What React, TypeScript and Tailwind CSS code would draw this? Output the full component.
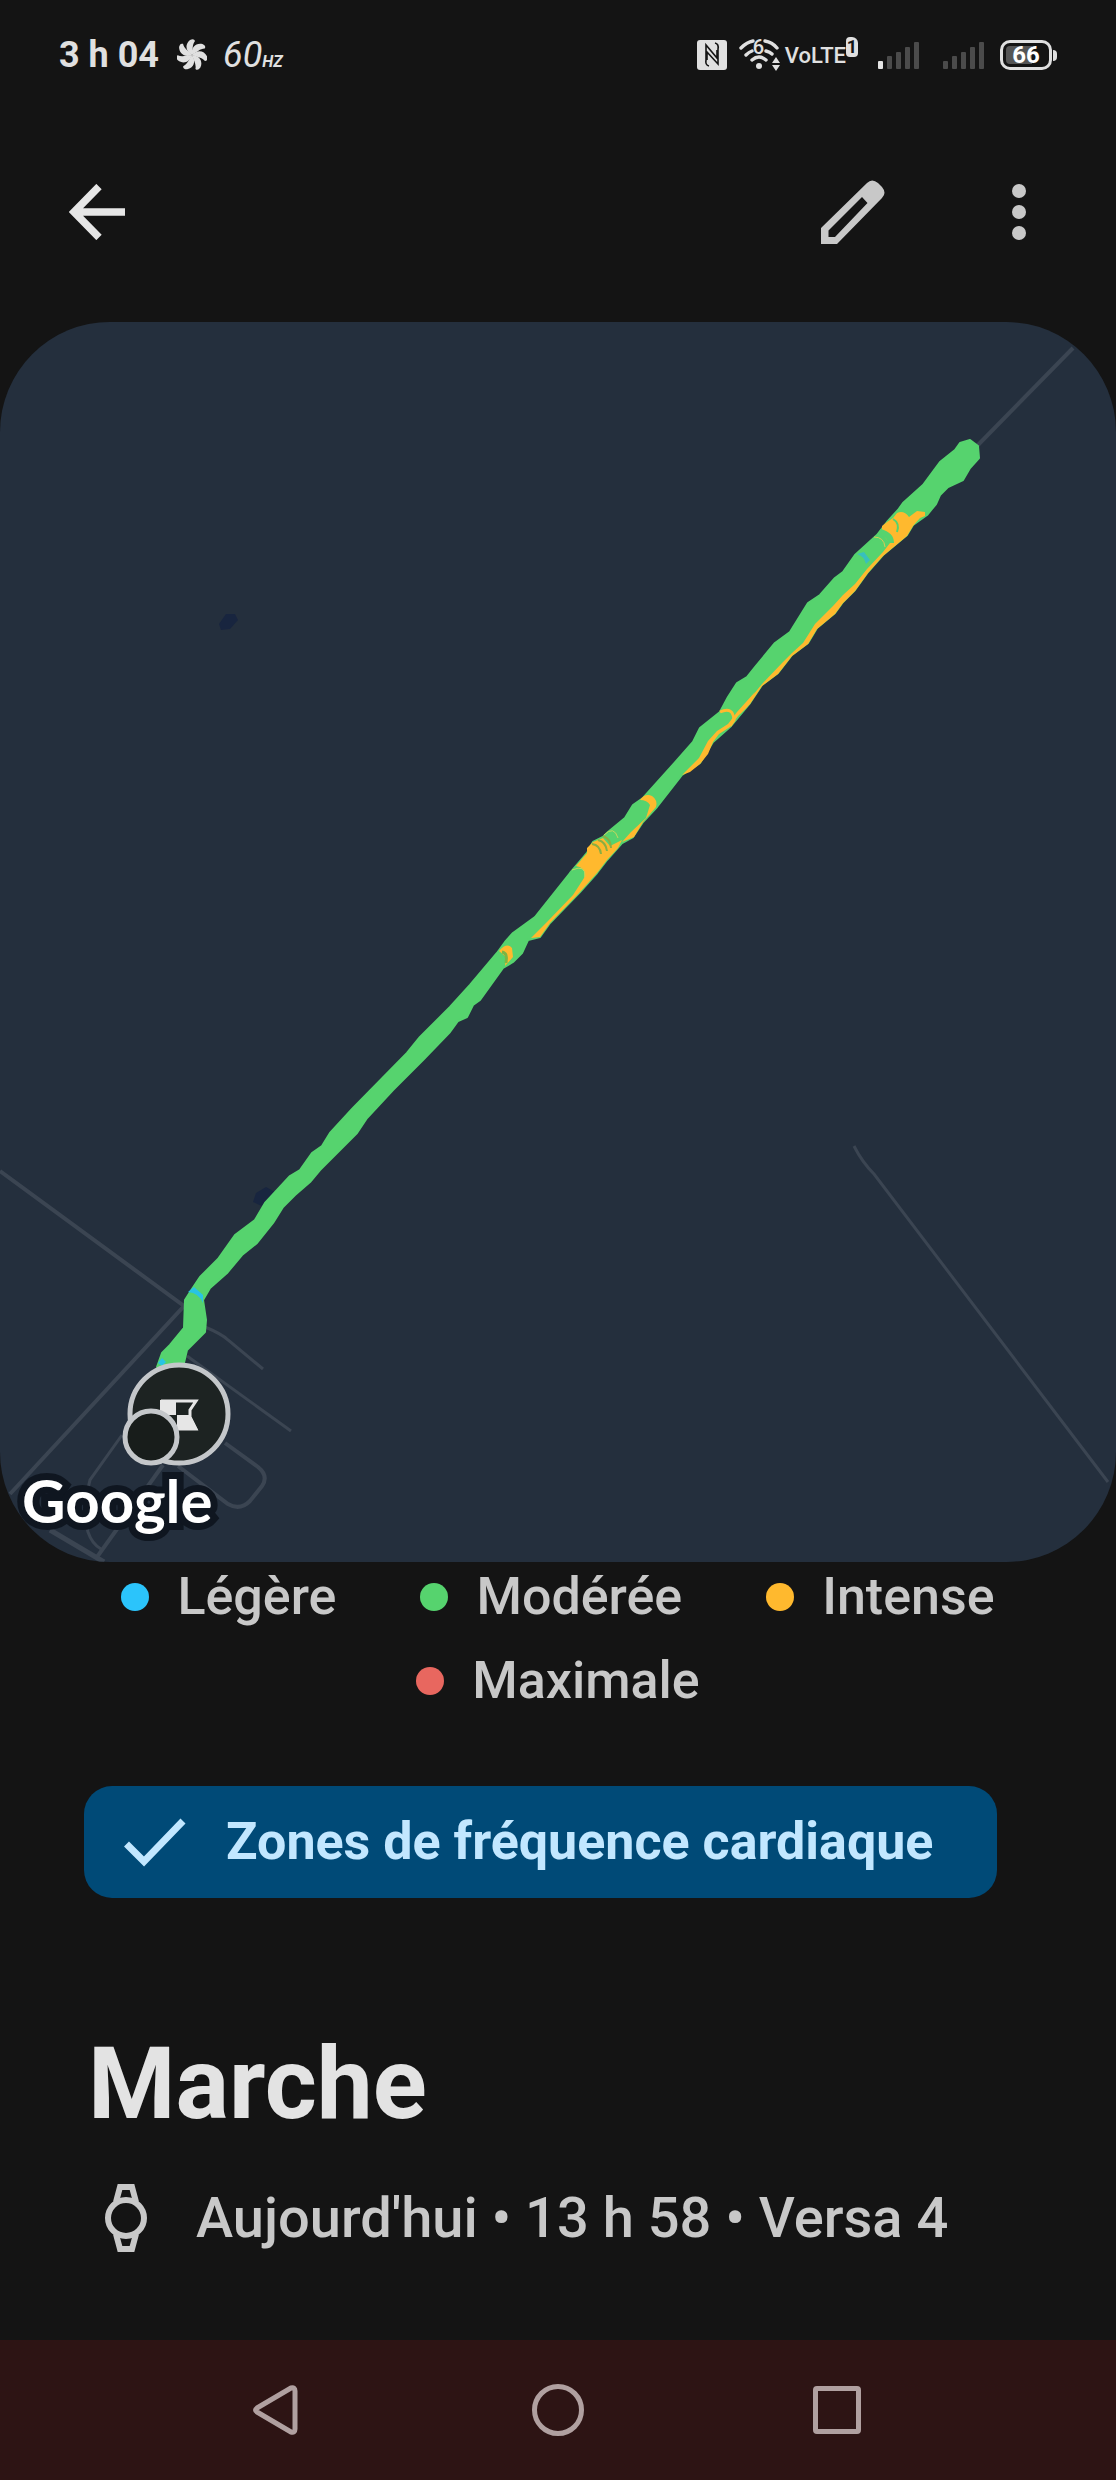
const zones = [
  { label: 'Légère', dot: 'bg-[#2bc4fb]' },
  { label: 'Modérée', dot: 'bg-[#56d36e]' },
  { label: 'Intense', dot: 'bg-[#ffb92e]' },
  { label: 'Maximale', dot: 'bg-[#e8675f]' },
];

const bars = [
  { x: 0, h: 8 },
  { x: 9, h: 13 },
  { x: 18, h: 17 },
  { x: 27, h: 22 },
  { x: 36, h: 27 },
];

function Signal({ level }: { level: number }) {
  return (
    <svg width="41" height="28" viewBox="0 0 41 28" aria-hidden="true">
      {bars.map((bar, i) => (
        <rect
          key={bar.x}
          x={bar.x}
          y={28 - bar.h}
          width="5"
          height={bar.h}
          rx="1"
          fill={i < level ? '#e4e4e4' : '#4b4b4b'}
        />
      ))}
    </svg>
  );
}

function Fan() {
  return (
    <svg width="30" height="32" viewBox="-15 -16 30 32" fill="#e0e0e0" aria-hidden="true">
      {[0, 51, 103, 154, 206, 257, 309].map((angle) => (
        <path key={angle} d="M0 0C-7 -4 -7 -11 -2 -15Q2 -17 3 -14C0 -10 1 -6 0 0Z" transform={`rotate(${angle})`} />
      ))}
    </svg>
  );
}

function Nfc() {
  return (
    <svg width="30" height="30" viewBox="0 0 30 30" aria-hidden="true">
      <rect width="30" height="30" rx="3" fill="#e0e0e0" />
      <path
        d="M12 26Q8 25 9 20V5L20 18V10M18 3Q22 4 21 9V24L10 12V20"
        fill="none"
        stroke="#141414"
        strokeWidth="1.6"
      />
    </svg>
  );
}

function Wifi() {
  return (
    <div className="relative">
      <svg width="42" height="34" viewBox="0 0 42 34" fill="none" stroke="#e0e0e0" strokeWidth="3.4" strokeLinecap="round" aria-hidden="true">
        <path d="M2 10Q8 4 14 3M26 3Q33 4 38 10" />
        <path d="M7 17Q10 14 13 13M27 13Q31 14 33 16" />
        <path d="M13 22Q20 16 27 22" />
        <circle cx="20" cy="28" r="3" fill="#e0e0e0" stroke="none" />
        <path d="M37 19L41 25H33ZM37 33L33 27H41Z" fill="#e0e0e0" stroke="none" />
      </svg>
      <span className="absolute left-[14px] top-0 text-[20px] font-medium leading-[18px]">6</span>
    </div>
  );
}

function StatusBar() {
  return (
    <div className="flex h-[110px] items-center justify-between px-[59px] text-[#e0e0e0]">
      <div className="flex items-center">
        <span className="text-[36px] font-bold">3 h 04</span>
        <span className="ml-[18px]">
          <Fan />
        </span>
        <span className="ml-4 flex items-baseline italic">
          <span className="text-[36px]">60</span>
          <span className="text-[16px] font-bold">HZ</span>
        </span>
      </div>
      <div className="flex items-center">
        <Nfc />
        <span className="ml-3">
          <Wifi />
        </span>
        <span className="ml-1 flex items-center">
          <span className="text-[22px] font-medium">VoLTE</span>
          <span className="mb-4 h-5 w-3 rounded-sm rounded-tr-md bg-[#e0e0e0] text-center text-[18px] font-bold leading-5 text-[#141414]">
            1
          </span>
        </span>
        <span className="ml-5">
          <Signal level={1} />
        </span>
        <span className="ml-6">
          <Signal level={0} />
        </span>
        <span className="ml-4 flex items-center gap-px">
          <span className="flex h-[30px] w-[52px] items-center justify-center rounded-[10px] border-[3px] border-[#e0e0e0] p-[3px]">
            <span className="flex h-full w-full items-center justify-center rounded-[4px] bg-linear-to-r from-[#555555] from-65% to-transparent to-65% text-[24px] font-bold text-white">
              66
            </span>
          </span>
          <span className="h-[11px] w-1 rounded-r-sm bg-[#e0e0e0]" />
        </span>
      </div>
    </div>
  );
}

function TopBar() {
  return (
    <header className="mb-2 flex h-[204px] items-center justify-between px-[49px]">
      <button type="button" aria-label="Retour" className="flex size-24 items-center justify-center">
        <svg width="56" height="56" viewBox="0 0 56 56" fill="none" stroke="#e6e6e6" strokeWidth="7.5">
          <path d="M56 28H6M30 2.500L5 28L30 53.500" />
        </svg>
      </button>
      <div className="flex gap-[70px]">
        <button type="button" aria-label="Modifier" className="flex size-24 items-center justify-center">
          <svg width="64" height="64" viewBox="0 0 64 64" fill="#c8c8c8">
            <path
              fillRule="evenodd"
              d="M0 48L46 3Q51 -2 57 3L61 7Q66 13 61 18L16 64H0ZM7.500 50.500V57H14L46.500 23L41 17Z"
            />
          </svg>
        </button>
        <button type="button" aria-label="Plus d'options" className="flex size-24 items-center justify-center">
          <svg width="14" height="56" viewBox="0 0 14 56" fill="#c8c8c8">
            <circle cx="7" cy="7" r="7" />
            <circle cx="7" cy="28" r="7" />
            <circle cx="7" cy="49" r="7" />
          </svg>
        </button>
      </div>
    </header>
  );
}

function RouteMap() {
  return (
    <section className="relative overflow-hidden rounded-[110px] bg-[#242f3d]">
      <svg viewBox="0 322 1116 1240" className="block h-auto w-full" role="img" aria-label="Parcours">
        {/* ponds */}
        <path d="M219 624L226 614L235 614L238 620L230 629L221 630Z" fill="#18253f" />
        <path d="M253 1202L256 1193L266 1187L275 1192L262 1206Z" fill="#18253f" />

        {/* roads */}
        <g fill="none" stroke="#3b4552" strokeWidth="4">
          <path d="M0 1171L184 1306L10 1494" />
          <path d="M205 1327Q222 1334 228 1340L263 1369" strokeWidth="3" />
          <path d="M187 1356L291 1431" strokeWidth="3" />
          <path d="M225 1443L258 1467Q269 1476 262 1486L250 1501Q240 1511 228 1504L178 1466" />
          <path d="M122 1435L90 1480Q82 1510 88 1532Q92 1544 101 1549" strokeWidth="3" />
          <path d="M163 1465L97 1557" />
          <path d="M50 1530L104 1562" strokeWidth="5" />
          <path d="M976 447L1073 348" />
          <path d="M854 1146Q862 1162 874 1174L1108 1482" strokeWidth="3" />
        </g>

        {/* moderate effort, whole walk */}
        <path
          fill="#56d36e"
          stroke="#56d36e"
          strokeWidth="2"
          strokeLinejoin="round"
          d="M157 1367L162 1353L170 1345L184 1328L185 1300L192 1289L200 1277L218 1259L235 1235L255 1220L265 1203L290 1176L300 1170L312 1153L322 1146L330 1133L353 1108L407 1053L420 1037L450 1007L470 985L497 953L505 942L513 933L535 917L570 873L587 853L593 842L603 837L608 832L625 818L633 805L643 798L670 768L693 742L700 728L720 712L728 697L737 683L747 677L755 667L775 643L790 632L808 603L820 595L835 578L843 572L855 555L877 535L887 522L898 510L903 503L923 485L940 462L955 450L960 443L970 440L978 446L979 458L970 468L963 480L948 487L940 495L936 504L927 515L913 525L907 535L895 545L883 555L868 572L855 590L843 602L835 613L817 628L808 643L792 655L778 673L762 685L750 703L730 727L713 742L700 763L682 775L657 807L643 822L633 837L622 843L607 860L597 873L580 892L550 923L540 937L528 940L522 953L513 962L503 968L480 1000L473 1005L467 1017L458 1021L450 1032L423 1060L393 1090L367 1118L357 1133L320 1170L310 1182L295 1195L283 1207L273 1223L257 1243L242 1255L227 1273L210 1288L203 1300L206 1320L205 1332L187 1350L183 1367Z"
        />

        {/* intense stretches */}
        <g fill="#ffb92e">
          <path d="M925 516L920 518L913 526L907 536L895 546L883 556L868 573L855 591L843 603L835 614L817 629L808 644L792 656L778 674L762 686L750 704L740 714L742 708L753 695L762 684L783 662L792 653L803 643L815 624L833 606L843 595L855 584L867 569L883 552L890 543L882 534V526L887 522L893 518L897 513Q904 510 909 517L917 511L925 512Z" />
          <path d="M755 692L747 707L738 716L730 727L719 734L713 742L708 754L700 764L690 772L682 775L699 758L708 741L717 731L728 724L737 712Z" />
          <path d="M640 800Q645 793 652 796Q658 800 656 807L643 822L634 837L622 842L631 832L646 818L650 805Q647 800 640 800Z" />
          <path d="M622 840L618 848L607 860L597 873L580 892L550 923L540 937L531 938L547 922L573 895L584 878Q587 868 576 866L587 853L587 848L593 842L603 838L610 846Z" />
          <path d="M499 951Q507 942 512 948L513 957L505 966L506 957Z" />
        </g>
        <g fill="none" strokeWidth="1">
          <path d="M720 712Q733 706 734 720L730 726" stroke="#ffb92e" strokeWidth="3" />
          <path d="M874 537Q884 537 885 547" stroke="#d6cc55" />
          <path d="M880 532Q891 535 891 543" stroke="#56d36e" strokeWidth="6" />
          <path d="M893 519Q900 523 897 532" stroke="#56d36e" strokeWidth="2" />
          <path d="M604 835Q614 825 618 838M572 870Q586 864 585 877" stroke="#c5d65d" />
          <path d="M592 844Q600 845 601 854M598 840Q606 842 607 851M603 836Q611 839 611 848" stroke="#8aae42" strokeWidth="2" />
          <path d="M502 952Q508 953 506 963" stroke="#7ab545" strokeWidth="3" />
        </g>

        {/* light effort */}
        <path d="M857 554L864 552L870 560L866 564Q864 556 857 554Z" fill="#38c0be" />
        <path d="M188 1292L194 1287L203 1295V1303Q199 1293 188 1292Z" fill="#28c4e4" />
        <path d="M158 1363L162 1358L166 1362L162 1366Z" fill="#28c4e4" />

        {/* finish marker */}
        <circle cx="179" cy="1414" r="49" fill="#1d2322" stroke="#c4c7ca" strokeWidth="5" />
        <path d="M160 1400H176V1415H160ZM177 1415H190L198 1430H177Z" fill="#e6e6e6" />
        <path d="M161 1401H196L190 1410V1417L196 1429H178" fill="none" stroke="#e6e6e6" strokeWidth="3" />
        <circle cx="151" cy="1437" r="26" fill="#181d1b" stroke="#c4c7ca" strokeWidth="5" />
      </svg>
      <span className="absolute bottom-[22px] left-[22px] font-['Lato'] text-[60px] font-bold leading-[80px] text-white [paint-order:stroke_fill] [-webkit-text-stroke:14px_#0f1620]">
        Google
      </span>
    </section>
  );
}

function NavBar() {
  return (
    <nav className="mt-auto flex h-[140px] items-center justify-center bg-[#2d1414]">
      <button type="button" aria-label="Précédent" className="flex w-1/4 items-center justify-center">
        <svg width="52" height="52" viewBox="0 0 52 52" fill="none" stroke="#b0a0a0" strokeWidth="5" strokeLinejoin="round">
          <path d="M4 24L38 4Q42 3 42 7V45Q42 49 38 48L4 28Q1 26 4 24Z" />
        </svg>
      </button>
      <button type="button" aria-label="Accueil" className="flex w-1/4 items-center justify-center">
        <span className="size-[52px] rounded-full border-[5px] border-[#b0a0a0]" />
      </button>
      <button type="button" aria-label="Applications récentes" className="flex w-1/4 items-center justify-center">
        <span className="size-12 rounded-[4px] border-[5px] border-[#b0a0a0]" />
      </button>
    </nav>
  );
}

export default function App() {
  return (
    <div className="flex min-h-screen flex-col bg-[#141414] font-['Roboto',sans-serif]">
      <StatusBar />
      <TopBar />
      <main>
        <RouteMap />

        <ul className="mt-[3px] flex flex-wrap justify-center gap-x-[84px] gap-y-5 px-[84px] text-[52px] font-medium leading-[64px] text-[#c8c8c8]">
          {zones.map((zone) => (
            <li key={zone.label} className="flex items-center gap-7">
              <span className={`size-7 rounded-full ${zone.dot}`} />
              {zone.label}
            </li>
          ))}
        </ul>

        <div className="px-[84px]">
          <button
            type="button"
            aria-pressed="true"
            className="mt-[73px] flex h-28 items-center gap-10 rounded-[28px] bg-[#004a77] pl-10 pr-16 text-[52px] font-bold text-[#c2e7ff]"
          >
            <svg width="62" height="50" viewBox="0 0 62 50" fill="none" stroke="#c2e7ff" strokeWidth="7" aria-hidden="true">
              <path d="M2.500 27L20 44.500L59 4" />
            </svg>
            Zones de fréquence cardiaque
          </button>

          <h1 className="mt-32 pl-1 text-[100px] font-bold leading-[116px] text-[#e3e3e3]">Marche</h1>

          <div className="mt-9 flex h-20 items-center text-[56px] font-medium text-[#c8c8c8]">
            <svg width="84" height="70" viewBox="0 0 84 70" fill="none" stroke="#c8c8c8" strokeWidth="6" aria-hidden="true">
              <circle cx="42" cy="35" r="18" />
              <path d="M32 19L36 4H48L52 19M32 51L36 66H48L52 51" />
            </svg>
            <p className="ml-7">Aujourd'hui • 13 h 58 • Versa 4</p>
          </div>
        </div>
      </main>
      <NavBar />
    </div>
  );
}
